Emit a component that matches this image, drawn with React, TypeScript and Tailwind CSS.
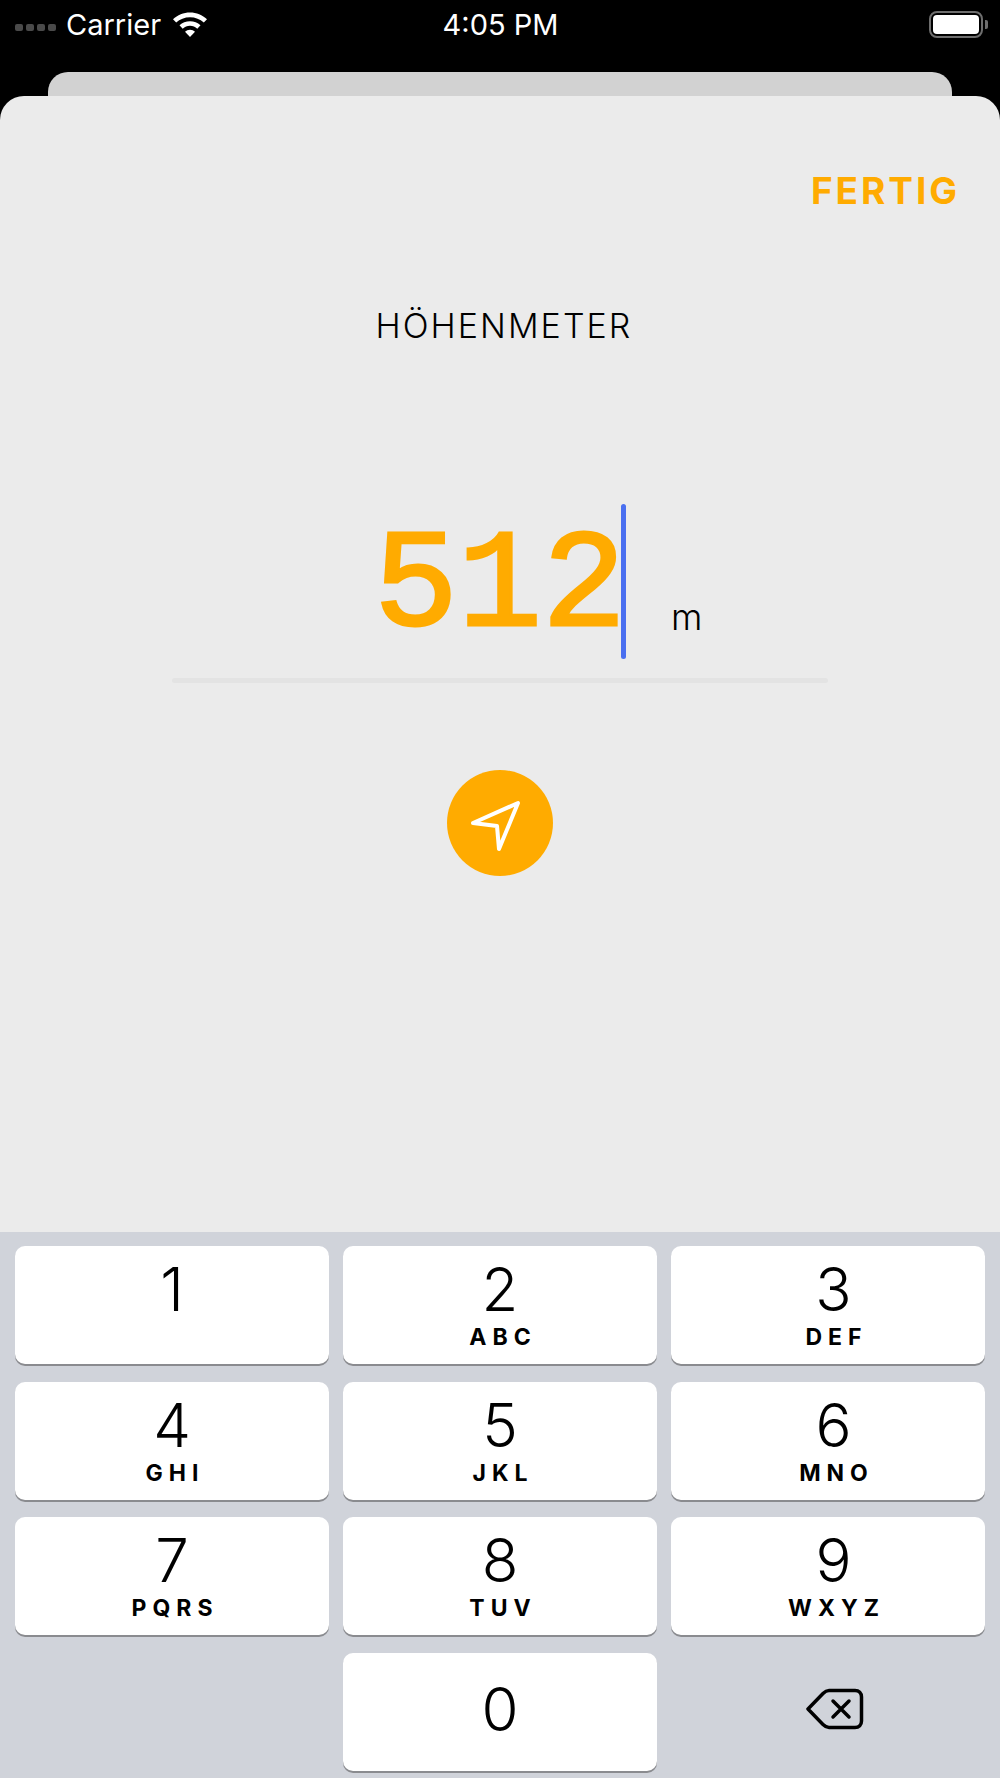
import React from 'react';

const keys = [
  { digit: '1', letters: '' },
  { digit: '2', letters: 'ABC' },
  { digit: '3', letters: 'DEF' },
  { digit: '4', letters: 'GHI' },
  { digit: '5', letters: 'JKL' },
  { digit: '6', letters: 'MNO' },
  { digit: '7', letters: 'PQRS' },
  { digit: '8', letters: 'TUV' },
  { digit: '9', letters: 'WXYZ' },
];

const Key: React.FC<{ digit: string; letters: string; right?: boolean; center?: boolean }> = ({ digit, letters, right, center }) => (
  <div className={`h-[118px] rounded-[10px] bg-white shadow-[0_2px_0_#8a8b8f] flex flex-col items-center ${right ? 'pl-[11px]' : ''}`}>
    <span className={`${center ? 'mt-[26px]' : 'mt-[13px]'} h-[60px] text-[60px] leading-[60px] font-light text-black`}>{digit}</span>
    {letters && (
      <span className="mt-[5px] pl-[6px] text-[23px] leading-[26px] font-bold tracking-[6px] text-black">{letters}</span>
    )}
  </div>
);

const StatusBar = () => (
  <div className="h-[48px] flex items-center justify-between pl-[15px] pr-[12px] text-white text-[29px]">
    <div className="flex items-center flex-1">
      <div className="flex gap-[3px] mt-[7px]">
        <span className="w-[8px] h-[7px] rounded-[2px] bg-[#4a4a4a]" />
        <span className="w-[8px] h-[7px] rounded-[2px] bg-[#4a4a4a]" />
        <span className="w-[8px] h-[7px] rounded-[2px] bg-[#4a4a4a]" />
        <span className="w-[8px] h-[7px] rounded-[2px] bg-[#4a4a4a]" />
      </div>
      <span className="ml-[10px] mt-[1px]">Carrier</span>
      <svg className="ml-[10px]" width="38" height="28" viewBox="0 0 36 28" fill="white">
        <path d="M18 2.5C11.5 2.5 5.6 5 1 9.2l3.2 3.4C7.9 9.200 12.700 7.200 18 7.200s10.100 2 13.800 5.400L35 9.200C30.400 5 24.500 2.500 18 2.500z" />
        <path d="M18 11.200c-4 0-7.700 1.500-10.500 4.100l3.200 3.400c2-1.800 4.500-2.900 7.300-2.900s5.300 1.100 7.300 2.900l3.200-3.400c-2.800-2.600-6.500-4.100-10.500-4.100z" />
        <path d="M18 19.800c-2 0-3.700.8-5 2L18 27l5-5.200c-1.300-1.200-3-2-5-2z" />
      </svg>
    </div>
    <span className="flex-none mt-[1px] mr-[2px]">4:05 PM</span>
    <div className="flex-1 flex justify-end items-center">
      <div className="w-[54px] h-[27px] rounded-[8px] border-2 border-[#6e6e6e] p-[2px]">
        <div className="w-full h-full rounded-[4px] bg-white" />
      </div>
      <div className="ml-[2px] w-[3px] h-[9px] rounded-r-[2px] bg-[#6e6e6e]" />
    </div>
  </div>
);

export default function App() {
  return (
    <div className="w-[1000px] h-[1778px] flex flex-col bg-black font-['Inter',sans-serif] overflow-hidden">
      <div className="h-[96px] flex flex-col">
        <StatusBar />
        <div className="mt-[24px] mx-[48px] h-[24px] rounded-t-[20px] bg-[#d2d2d2]" />
      </div>

      <div className="flex-1 rounded-t-[24px] bg-[#ebebeb] flex flex-col items-center">
        <div className="w-full flex justify-end pr-[40px] mt-[73px]">
          <span className="text-[37px] leading-[44px] font-bold tracking-[0.08em] text-[#ffab00]">FERTIG</span>
        </div>
        <div className="mt-[91px] ml-[8px] text-[34px] leading-[44px] font-light tracking-[0.06em] text-black">HÖHENMETER</div>

        <div className="mt-[156px] w-[656px] h-[154px] flex items-center">
          <div className="ml-[202px] flex items-center">
            <span className="pt-[14px] font-['Liberation_Mono',monospace] text-[140px] leading-[154px] text-[#ffab00] [-webkit-text-stroke:3px_#ffab00]">512</span>
            <span className="ml-[-5px] w-[5px] h-[155px] rounded-full bg-[#4a6ff0]" />
          </div>
          <span className="ml-[45px] mt-[72px] text-[36px] leading-[40px] font-light text-black">m</span>
        </div>
        <div className="mt-[20px] w-[656px] h-[5px] rounded-full bg-[#e3e3e3]" />

        <div className="mt-[87px] w-[106px] h-[106px] rounded-full bg-[#ffab00]">
          <svg width="106" height="106" viewBox="0 0 106 106" fill="none" stroke="white" strokeWidth="4" strokeLinejoin="round" strokeLinecap="round">
            <path d="M26 53L71 33L52 79L50 56Z" />
          </svg>
        </div>
      </div>

      <div className="h-[546px] bg-[#d0d3da] px-[15px] pt-[14px] grid grid-cols-3 gap-x-[14px] gap-y-[17.500px] content-start">
        {keys.map((k, i) => (
          <Key key={k.digit} digit={k.digit} letters={k.letters} right={i % 3 === 2} />
        ))}
        <div />
        <Key digit="0" letters="" center />
        <div className="h-[118px] flex items-center justify-center">
          <svg className="ml-[14px] mb-[5px]" width="58" height="42" viewBox="0 0 58 42" fill="none" stroke="black" strokeWidth="3.500" strokeLinejoin="round" strokeLinecap="round">
            <path d="M2 21L17 5.500C18.500 4 20 2.500 23 2.500H49C53 2.500 55.500 5 55.500 9V33C55.500 37 53 39.500 49 39.500H23C20 39.500 18.500 38 17 36.500Z" />
            <path d="M27 13L43 29M43 13L27 29" />
          </svg>
        </div>
      </div>
    </div>
  );
}
